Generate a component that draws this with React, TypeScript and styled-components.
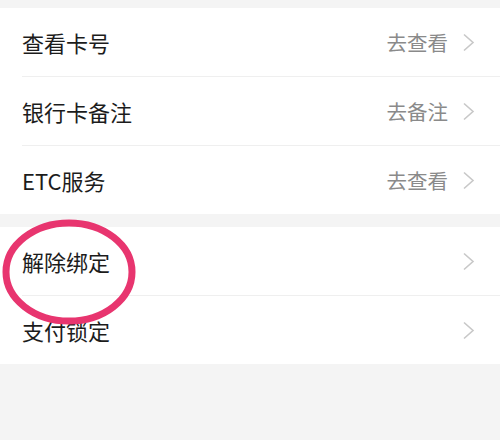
import React from "react";
import styled, { createGlobalStyle } from "styled-components";

const Global = createGlobalStyle`
  html, body { margin: 0; padding: 0; background: #f4f4f4; }
  body { font-family: "Noto Sans CJK SC", "Noto Sans", sans-serif; }
`;

const Page = styled.div`
  position: relative;
  width: 500px;
  height: 440px;
  background: #f4f4f4;
  padding-top: 8px;
  box-sizing: border-box;
  display: flex;
  flex-direction: column;
  gap: 13px;
  overflow: hidden;
`;

const Group = styled.div`
  background: #ffffff;
  display: flex;
  flex-direction: column;
`;

const Row = styled.div`
  height: 68px;
  display: flex;
  align-items: center;
  padding: 0 25px 0 22px;
`;

const Divider = styled.div`
  height: 1px;
  margin-left: 22px;
  background: #efefef;
`;

const Label = styled.span`
  flex: 1;
  font-size: 22px;
  color: #1c1c1c;
`;

const Hint = styled.span`
  font-size: 20.5px;
  color: #8a8a8a;
  margin-right: 14px;
`;

const Chevron = () => (
  <svg width="13" height="19" viewBox="0 0 13 19">
    <path d="M2 1.5 L11 9.5 L2 17.5" fill="none" stroke="#c8c8c8" strokeWidth="1.6" />
  </svg>
);

const Circle = styled.svg`
  position: absolute;
  left: 0;
  top: 218px;
  pointer-events: none;
`;

type Item = { label: string; hint?: string };

const groupA: Item[] = [
  { label: "查看卡号", hint: "去查看" },
  { label: "银行卡备注", hint: "去备注" },
  { label: "ETC服务", hint: "去查看" },
];
const groupB: Item[] = [{ label: "解除绑定" }, { label: "支付锁定" }];

const renderGroup = (items: Item[]) => (
  <Group>
    {items.map((it, i) => (
      <React.Fragment key={it.label}>
        {i > 0 && <Divider />}
        <Row>
          <Label>{it.label}</Label>
          {it.hint && <Hint>{it.hint}</Hint>}
          <Chevron />
        </Row>
      </React.Fragment>
    ))}
  </Group>
);

export default function App() {
  return (
    <>
      <Global />
      <Page>
        {renderGroup(groupA)}
        {renderGroup(groupB)}
        <Circle width="145" height="112" viewBox="0 0 145 112">
          <ellipse cx="69" cy="54" rx="63" ry="49" fill="none" stroke="#e8356f" strokeWidth="7" />
        </Circle>
      </Page>
    </>
  );
}
